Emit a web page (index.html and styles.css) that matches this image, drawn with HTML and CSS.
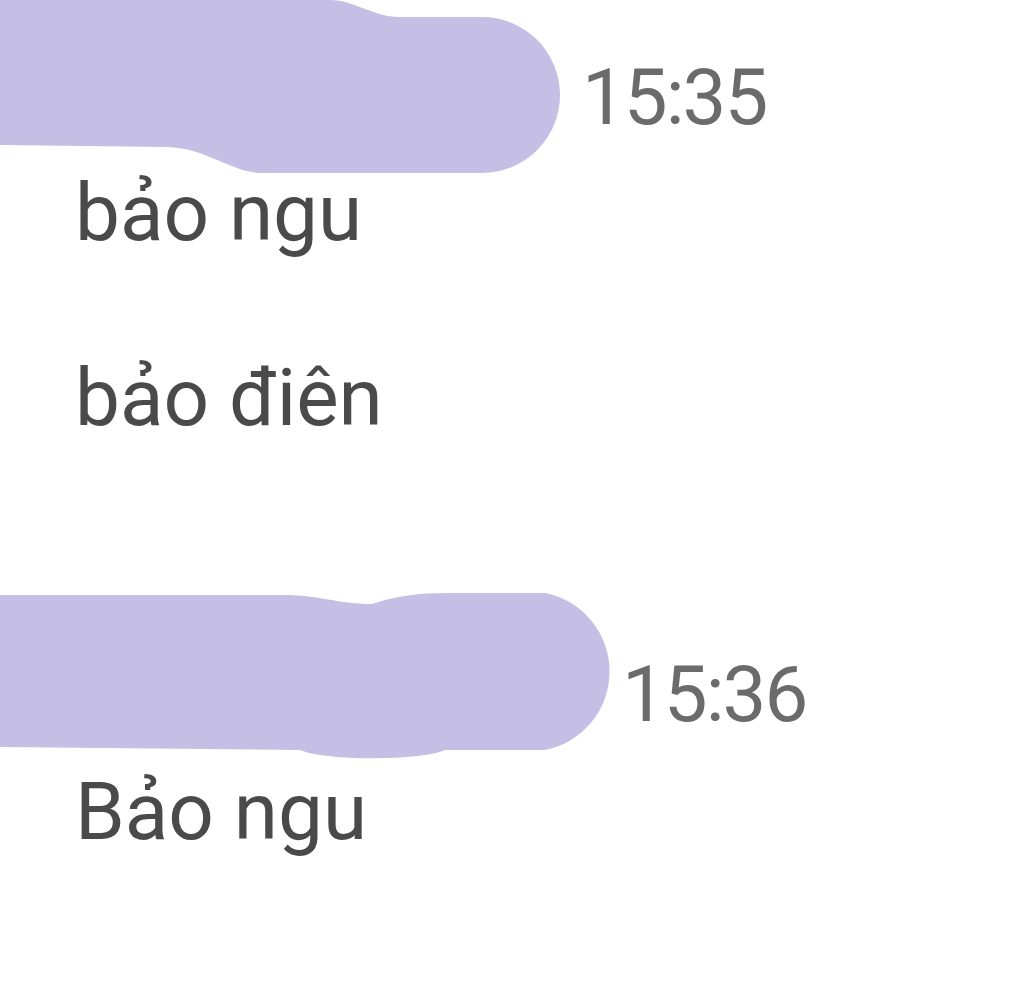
FILE: index.html
```html
<!DOCTYPE html>
<html lang="vi">
<head>
<meta charset="utf-8">
<title>Chat</title>
<link rel="stylesheet" href="styles.css">
</head>
<body>
<div class="chat">
  <div class="row row-first">
    <svg class="blob blob-1" width="560" height="173" viewBox="0 0 560 173" aria-hidden="true">
      <path d="M0,0 L330,0 C355,0 372,17 400,17 L482,17 A78,78 0 0 1 482,173 L262,173 C232,173 205,147 165,147 L0,145 Z" fill="#c5bfe6"/>
    </svg>
    <span class="time time-1">15:35</span>
  </div>
  <p class="msg msg-1">bảo ngu</p>
  <p class="msg msg-2">bảo điên</p>
  <div class="row row-second">
    <svg class="blob blob-2" width="620" height="168" viewBox="0 0 620 168" aria-hidden="true">
      <path d="M0,5 L285,5 C318,5 338,14 372,14 C395,6 420,3 448,3 L545,3 A80,80 0 0 1 545,160 L445,160 C425,170 330,172 300,160 L0,157 Z" fill="#c5bfe6"/>
    </svg>
    <span class="time time-2">15:36</span>
  </div>
  <p class="msg msg-3">Bảo ngu</p>
</div>
</body>
</html>
```
FILE: styles.css
```css
html, body {
  margin: 0;
  padding: 0;
  background: #ffffff;
}

body {
  font-family: Roboto, "Liberation Sans", sans-serif;
  width: 1024px;
  height: 993px;
  overflow: hidden;
}

.chat {
  display: flex;
  flex-direction: column;
}

.row {
  display: flex;
  align-items: flex-start;
}

.blob {
  display: block;
  flex: none;
  overflow: visible;
}

.time {
  font-size: 78px;
  line-height: 80px;
  color: #6b6b6b;
  letter-spacing: -2px;
  white-space: nowrap;
}

.time-1 {
  margin-left: 22px;
  margin-top: 58px;
}

.row-second {
  margin-top: 152px;
}

.time-2 {
  margin-left: 2px;
  margin-top: 65px;
}

.msg {
  margin: 0;
  padding-left: 75px;
  font-size: 80px;
  line-height: 80px;
  color: #4a4a4a;
  letter-spacing: 0;
  white-space: nowrap;
}

.msg-2 {
  margin-top: 105px;
}

.msg-3 {
  margin-top: 14px;
}
```
